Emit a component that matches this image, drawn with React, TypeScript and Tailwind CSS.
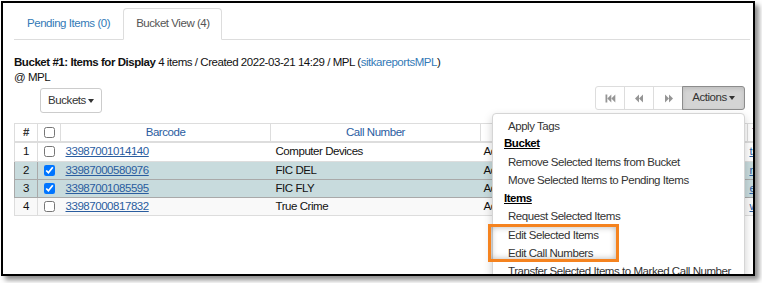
import React from 'react';

const rows = [
  { n: 1, code: '33987001014140', call: 'Computer Devices', sel: false, bg: 'bg-white', tail: 'ts for' },
  { n: 2, code: '33987000580976', call: 'FIC DEL', sel: true, bg: 'bg-[#c8dbdd]', tail: 'rary' },
  { n: 3, code: '33987001085595', call: 'FIC FLY', sel: true, bg: 'bg-[#c8dbdd]', tail: 'ect' },
  { n: 4, code: '33987000817832', call: 'True Crime', sel: false, bg: 'bg-[#f9f9f9]', tail: 'wins' },
];

const menu: { label: string; header?: boolean }[] = [
  { label: 'Apply Tags' },
  { label: 'Bucket', header: true },
  { label: 'Remove Selected Items from Bucket' },
  { label: 'Move Selected Items to Pending Items' },
  { label: 'Items', header: true },
  { label: 'Request Selected Items' },
  { label: 'Edit Selected Items' },
  { label: 'Edit Call Numbers' },
  { label: 'Transfer Selected Items to Marked Call Number' },
];

const Caret = () => (
  <span className="inline-block w-0 h-0 ml-[2px] align-middle border-x-[3px] border-x-transparent border-t-[4px] border-t-[#333]" />
);

const PagerIcon = ({ kind }: { kind: 'first' | 'prev' | 'next' }) => (
  <svg width="11" height="9" viewBox="0 0 11 9" fill="#959595">
    {kind === 'first' && (
      <>
        <rect x="0.5" y="0.5" width="1.8" height="8" />
        <polygon points="2.3,4.5 6.3,0.5 6.3,8.5" />
        <polygon points="6.3,4.5 10.3,0.5 10.3,8.5" />
      </>
    )}
    {kind === 'prev' && (
      <>
        <polygon points="1,4.5 5,0.5 5,8.5" />
        <polygon points="5,4.5 9,0.5 9,8.5" />
      </>
    )}
    {kind === 'next' && (
      <>
        <polygon points="2,0.5 6,4.5 2,8.5" />
        <polygon points="6,0.5 10,4.5 6,8.5" />
      </>
    )}
  </svg>
);

export default function App() {
  return (
    <div
      className="w-[762px] h-[283px] bg-white overflow-hidden text-[11.5px] tracking-[-0.45px] text-[#333]"
      style={{ fontFamily: '"Liberation Sans", Arial, sans-serif' }}
    >
      <div className="relative ml-px mt-px w-[754px] h-[275px] border-2 border-black bg-white overflow-hidden shadow-[4px_4px_5px_rgba(0,0,0,0.45)]">
        <div className="pl-[11px] pt-[5px]">
          {/* tabs */}
          <ul className="flex w-[736px] h-[32px] border-b border-[#ddd]">
            <li className="pl-[13px] pr-[13px] h-[32px] flex items-center text-[#337ab7]">Pending Items (0)</li>
            <li className="-mb-px pl-[12px] pr-[11px] h-[32px] flex items-center bg-white border border-[#ddd] border-b-transparent rounded-t-[4px] text-[#555]">
              Bucket View (4)
            </li>
          </ul>

          <div className="mt-[15px] leading-[15px] text-[#111]">
            <div>
              <span className="font-bold">Bucket #1: Items for Display</span> 4 items / Created 2022-03-21 14:29 / MPL (
              <span className="text-[#337ab7]">sitkareportsMPL</span>)
            </div>
            <div>@ MPL</div>
          </div>

          <div className="flex justify-between items-start w-[736px] mt-px">
            <button className="ml-[26px] mt-[2px] w-[62px] h-[25px] border border-[#ccc] rounded-[3px] bg-white text-[#333]">
              Buckets
              <Caret />
            </button>
            <div className="relative mr-[5px] flex h-[24px]">
              <span className="w-[30px] flex items-center justify-center border border-[#ddd] rounded-l-[3px] bg-white">
                <PagerIcon kind="first" />
              </span>
              <span className="w-[30px] -ml-px flex items-center justify-center border border-[#ddd] bg-white">
                <PagerIcon kind="prev" />
              </span>
              <span className="w-[30px] -ml-px flex items-center justify-center border border-[#ddd] bg-white">
                <PagerIcon kind="next" />
              </span>
              <span className="w-[63px] -ml-px flex items-center justify-center border border-[#8c8c8c] rounded-r-[3px] bg-[#d4d4d4] text-[#333] shadow-[inset_0_2px_4px_rgba(0,0,0,0.1)]">
                Actions
                <Caret />
              </span>

              <div className="absolute right-0 top-[27px] z-10 w-[253px] pt-[3px] bg-white border border-[#d5d5d5] rounded-[4px] shadow-[0_4px_10px_rgba(0,0,0,0.2)]">
                {menu.map((m) =>
                  m.header ? (
                    <div key={m.label} className="pl-[11px] h-[17.5px] leading-[17px] font-bold underline text-black">
                      {m.label}
                    </div>
                  ) : (
                    <div key={m.label} className="pl-[15px] h-[18.4px] leading-[18px] text-[#333] whitespace-nowrap">
                      {m.label}
                    </div>
                  )
                )}
              </div>
            </div>
          </div>

          <table className="mt-[10px] w-[900px] table-fixed border-collapse">
            <colgroup>
              <col className="w-[23px]" />
              <col className="w-[23px]" />
              <col className="w-[210px]" />
              <col className="w-[210px]" />
              <col className="w-[267px]" />
              <col />
            </colgroup>
            <thead>
              <tr className="h-[18px]">
                <th className="border border-[#ddd] border-b-2 font-bold text-center text-[#333]">#</th>
                <th className="border border-[#ddd] border-b-2">
                  <input type="checkbox" readOnly className="block mx-auto w-[11px] h-[11px]" />
                </th>
                <th className="border border-[#ddd] border-b-2 font-normal text-center text-[#2a5d9f]">Barcode</th>
                <th className="border border-[#ddd] border-b-2 font-normal text-center text-[#2a5d9f]">Call Number</th>
                <th className="border border-[#ddd] border-b-2 font-normal text-center text-[#2a5d9f]">Location</th>
                <th className="border border-[#ddd] border-b-2 font-normal text-left pl-[4px] text-[#2a5d9f]">Title</th>
              </tr>
            </thead>
            <tbody>
              {rows.map((r) => (
                <tr key={r.n} className={`h-[18px] ${r.bg}`}>
                  <td className={`border ${r.sel ? 'border-[#a9a9a9]' : 'border-[#ddd]'} text-center text-[#111]`}>{r.n}</td>
                  <td className={`border-y ${r.sel ? 'border-[#a9a9a9]' : 'border-[#ddd]'}`}>
                    <input type="checkbox" readOnly checked={r.sel} className="block mx-auto w-[11px] h-[11px]" />
                  </td>
                  <td className={`border-y ${r.sel ? 'border-[#a9a9a9]' : 'border-[#ddd]'} pl-[5px] text-[#2a5d9f] underline`}>{r.code}</td>
                  <td className={`border-y ${r.sel ? 'border-[#a9a9a9]' : 'border-[#ddd]'} pl-[5px] text-[#111]`}>{r.call}</td>
                  <td className={`border-y ${r.sel ? 'border-[#a9a9a9]' : 'border-[#ddd]'} pl-[3px] text-[#111]`}>Adult</td>
                  <td className={`border-y ${r.sel ? 'border-[#a9a9a9]' : 'border-[#ddd]'} pl-[2px] text-[#2a5d9f] underline whitespace-nowrap`}>{r.tail}</td>
                </tr>
              ))}
            </tbody>
          </table>
        </div>

        {/* highlight annotation */}
        <div className="absolute left-[485px] top-[221px] z-20 w-[131px] h-[38px] border-[3px] border-[#f5831f] shadow-[inset_0_0_6px_rgba(0,0,0,0.3)]" />
      </div>
    </div>
  );
}
